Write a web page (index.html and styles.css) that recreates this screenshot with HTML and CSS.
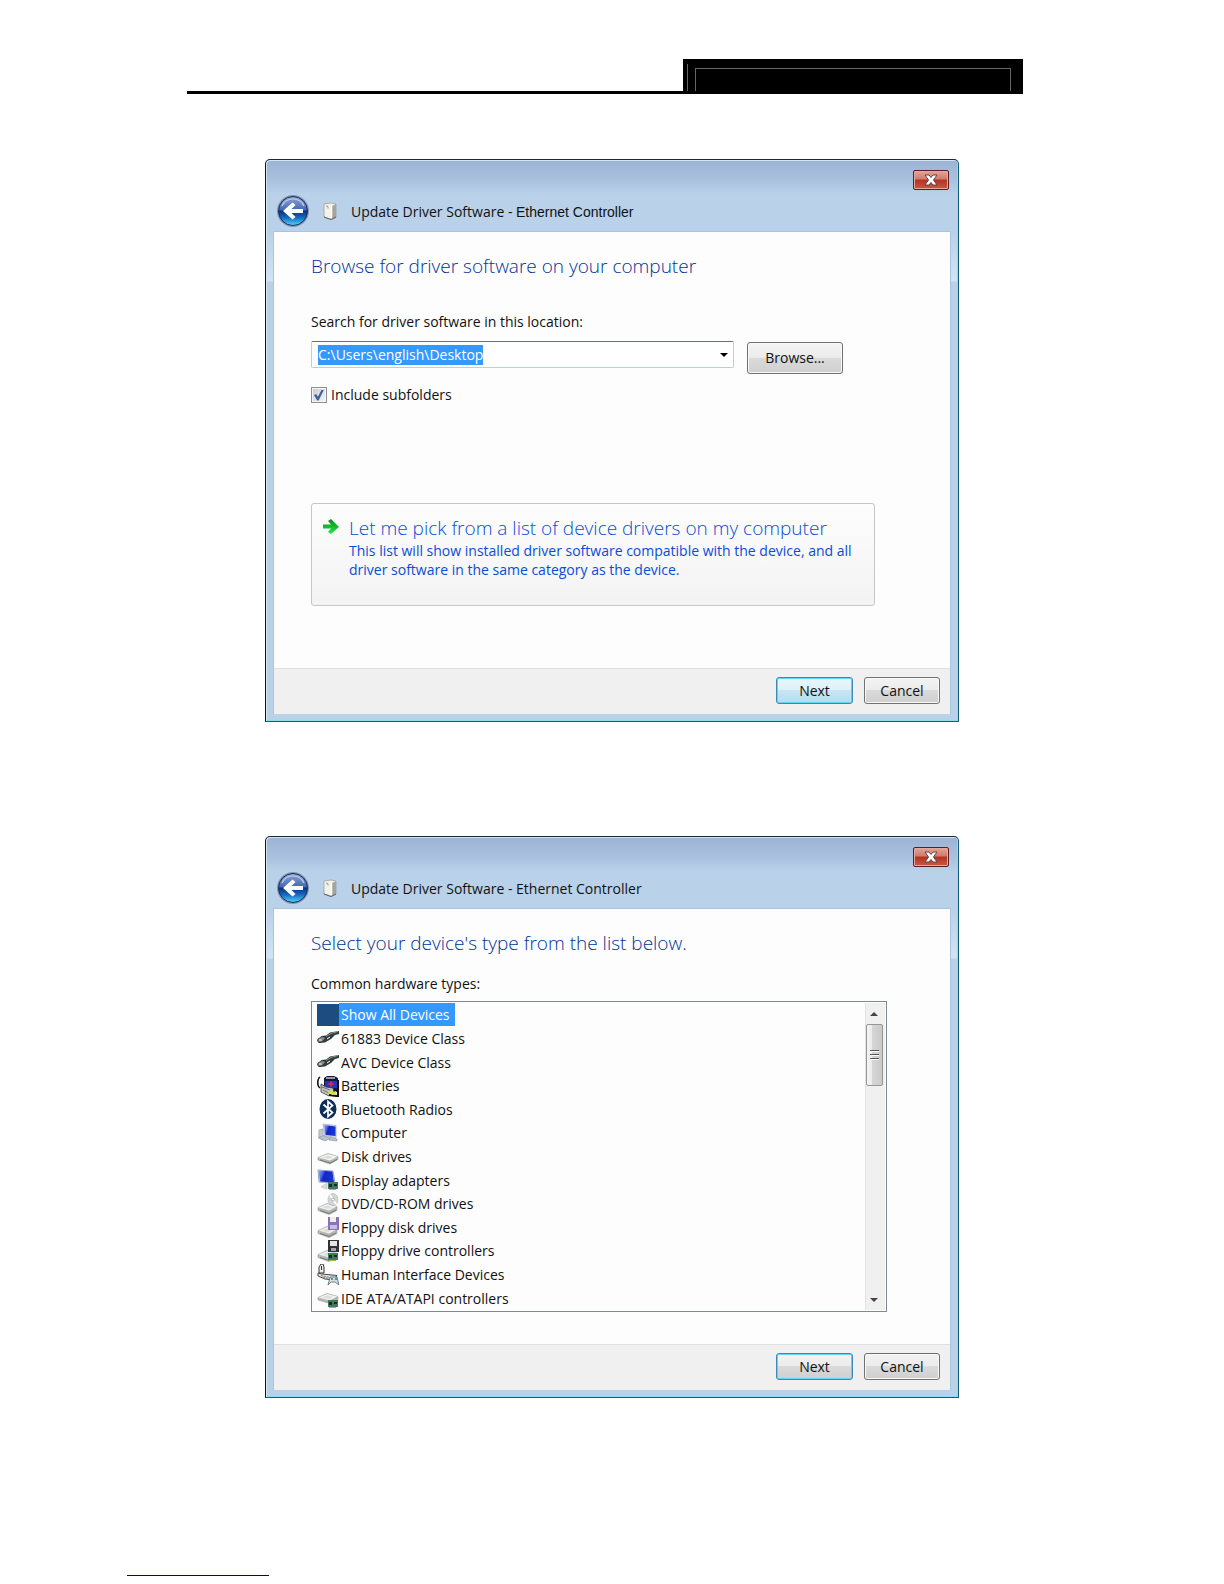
FILE: index.html
```html
<!DOCTYPE html>
<html lang="en">
<head>
<meta charset="utf-8">
<title>Update Driver Software</title>
<link rel="stylesheet" href="styles.css">
</head>
<body>
<svg class="defs" aria-hidden="true">
  <defs>
    <linearGradient id="ball" x1="0" y1="0" x2="0" y2="1">
      <stop offset="0" stop-color="#8fa5d2"/><stop offset=".46" stop-color="#4668b4"/>
      <stop offset=".5" stop-color="#0b2f83"/><stop offset=".72" stop-color="#1268bd"/><stop offset="1" stop-color="#4fd6fa"/>
    </linearGradient>
    <linearGradient id="screen" x1="0" y1="0" x2="1" y2=".3">
      <stop offset="0" stop-color="#8fa6f4"/><stop offset=".3" stop-color="#4a66e4"/><stop offset=".45" stop-color="#1226c4"/><stop offset="1" stop-color="#1a34d4"/>
    </linearGradient>
    <linearGradient id="go" x1="0" y1="0" x2="0" y2="1">
      <stop offset="0" stop-color="#0a8a1c"/><stop offset=".5" stop-color="#17b92c"/><stop offset="1" stop-color="#1df04a"/>
    </linearGradient>
    <symbol id="back" viewBox="0 0 34 34">
      <circle cx="17" cy="17" r="16" fill="#8296b4"/>
      <circle cx="17" cy="17" r="14.5" fill="url(#ball)" stroke="#1c2f5c"/>
      <path d="M6 12a12 12 0 0 1 22 0" fill="none" stroke="#b9c8e6" stroke-width="1.2"/>
      <path d="M7 17l9.500-8.500 3 2.500-4 4H27v4H15.500l4 4-3 2.500z" fill="#fff"/>
    </symbol>
    <symbol id="tower" viewBox="0 0 14 18">
      <path d="M1 2l7-1 5 1v13l-5 2.500L1 15z" fill="#f2f2ec" stroke="#9fa19a" stroke-width=".8"/>
      <path d="M9 4l4-2v13l-4 2z" fill="#a5a59b"/>
      <path d="M1 15l7 2.500 5-2.500" fill="none" stroke="#5e5e58"/>
      <path d="M3 4l2 .5v2" fill="none" stroke="#999"/><path d="M8.500 4v12" stroke="#fff" stroke-width="1.500"/>
    </symbol>
    <symbol id="close" viewBox="0 0 14 12">
      <path d="M1 1h4l2 2.500L9 1h4L9.500 6l3.500 5H9L7 8.500 5 11H1l3.500-5z" fill="#fff" stroke="#59464a"/>
    </symbol>
    <symbol id="plug" viewBox="0 0 22 22">
      <path d="M0 13l5-4 4-.5 4-3 9-1.500v3l-4 1-4 4-6 3.500-6 .5z" fill="#333b3b"/>
      <path d="M9 9.500l5-3 7-2" fill="none" stroke="#8d9393"/>
      <path d="M1 12l4-2.500 4 1-4 4.500H1z" fill="#8a8d8d" stroke="#222" stroke-width=".7"/>
      <path d="M2 13h2.500M10 12l3-2" stroke="#fff"/>
    </symbol>
    <symbol id="battery" viewBox="0 0 22 22">
      <path d="M7 3l3-2h7l4 2v14H7z" fill="#11183c"/>
      <path d="M9 2h9v2H9z" fill="#9599ab"/><path d="M8 6h12v7H8z" fill="#2634bd"/>
      <path d="M14 6.500v5M11.500 9h5" stroke="#e02442" stroke-width="2"/>
      <path d="M3 2C0 4 0 11 3 13" fill="none" stroke="#111" stroke-width="1.500"/>
      <path d="M4 9l5 3 7 1 1 4-5 4-8-4z" fill="#c4c7c3" stroke="#333" stroke-width=".8"/>
      <path d="M5 12l8 3M6 15l6 3" stroke="#6b6e6b"/>
      <path d="M12 20l7 1h2V5" fill="none" stroke="#111" stroke-width="2"/>
      <path d="M12 16l3-1 1 2 3-1 1 4-3-1-1 1-5-2z" fill="#d8e43c"/>
    </symbol>
    <symbol id="bluetooth" viewBox="0 0 22 22">
      <ellipse cx="11" cy="11" rx="8.500" ry="10" fill="#0b2d57"/>
      <path d="M6.500 6.500l9 8-4.500 4V3.500l4.500 4-9 8" fill="none" stroke="#fff" stroke-width="1.700"/>
    </symbol>
    <symbol id="computer" viewBox="0 0 22 22">
      <path d="M2 8l4-1v11l-4-2z" fill="#c5c8cc" stroke="#a7acb3"/>
      <path d="M6 2l13 1.500v12L8 14z" fill="#e1e5ee" stroke="#9aa5bb" stroke-width=".7"/>
      <path d="M7 3l11.500 1.500V14l-10-1z" fill="url(#screen)"/>
      <path d="M1 15.500l6-2 6 3-5 2.500zM13 15l7 2v2l-8-1z" fill="#b9c1cc" stroke="#8b94a0" stroke-width=".6"/>
    </symbol>
    <symbol id="disk" viewBox="0 0 22 22">
      <path d="M1 12.500l10-4 10 3v3l-8 4.500-12-4z" fill="#b4b6b4" stroke="#999c99" stroke-width=".6"/>
      <path d="M1.500 12.500L11 9l9.500 2.500-7.500 4z" fill="#f3f4f2"/>
      <path d="M5 12.500l6-2 5 1.500-4 2z" fill="#dcdedb"/>
      <path d="M3 15l10 3 7-3.500" fill="none" stroke="#777b77"/>
    </symbol>
    <symbol id="board" viewBox="0 0 22 22">
      <path d="M11 13h10v7H11z" fill="#3d7a5f"/><path d="M12 15h3v3h-3zM17 15h3v2h-3z" fill="#162c23"/><path d="M12 20.500h7" stroke="#b9ae45"/>
    </symbol>
    <symbol id="display" viewBox="0 0 22 22">
      <path d="M1 1l15 1 2 12-16-1z" fill="#dce3f1" stroke="#93a4cb"/>
      <path d="M1.500 1.500l14 1 1.500 11-14-1z" fill="url(#screen)"/>
      <path d="M4 18l6-4v6z" fill="#d9dbde" stroke="#bbb" stroke-width=".6"/><use href="#board"/>
    </symbol>
    <symbol id="tray" viewBox="0 0 22 22">
      <path d="M1 14.500l9-4 10 3v4l-8 4-11-4z" fill="#b4b6b4" stroke="#999c99" stroke-width=".6"/>
      <path d="M1.500 14.500L10 11l9.500 2.500-7.500 4z" fill="#f0f1ef"/>
      <path d="M5 14.500l5-2 5 1.500-4 2z" fill="#dcdedb"/><path d="M3 17.500l9 3 7-3.500" fill="none" stroke="#777b77"/>
    </symbol>
    <symbol id="dvd" viewBox="0 0 22 22">
      <use href="#tray"/><ellipse cx="16" cy="6.500" rx="5" ry="6" fill="#d3d7d6" stroke="#b0b5b3" stroke-width=".6"/>
      <path d="M13 2l6 9" stroke="#fff" stroke-width="2"/><circle cx="16" cy="6.500" r="1.500" fill="#fff" stroke="#999" stroke-width=".7"/>
    </symbol>
    <symbol id="floppy" viewBox="0 0 22 22">
      <use href="#tray"/><path d="M11 1h11v13H11z" fill="#8a72b6"/><path d="M13 1h6v5h-6z" fill="#eee"/><path d="M13 9h7v4h-7z" fill="#c9bce0"/>
    </symbol>
    <symbol id="floppyctl" viewBox="0 0 22 22">
      <use href="#tray"/><path d="M11 0h11v12H11z" fill="#2f3038"/><path d="M13 1h7v5h-7z" fill="#e5e5e5"/><path d="M14 8h5v3h-5z" fill="#a5a5a5"/><use href="#board"/>
    </symbol>
    <symbol id="hid" viewBox="0 0 22 22">
      <path d="M2 9V3l2-3h2l1 3v6z" fill="#eee" stroke="#333"/><path d="M4.500 2v4" stroke="#333"/>
      <path d="M1 9l4 1 15 1.500-3 4.500-9-1-7-3z" fill="#e1e2df" stroke="#484b48"/>
      <path d="M4 11.500l9 2M6 13l6 1.500" stroke="#888" stroke-dasharray="2 1"/>
      <path d="M11 21l2-8h7l2 8-4-3h-4z" fill="#d4dfe2" stroke="#53666e" stroke-width=".8"/><path d="M14 15h2M19 14v2" stroke="#227db8" stroke-width="1.500"/>
    </symbol>
    <symbol id="ide" viewBox="0 0 22 22">
      <path d="M1 10.500l9-4 11 3v3l-8 4-12-3.500z" fill="#b4b6b4" stroke="#999c99" stroke-width=".6"/>
      <path d="M1.500 10.500L10 7l10.500 2.500-8 4z" fill="#f0f1ef"/><path d="M5 10.500l5-2 6 1.500-4 2z" fill="#dcdedb"/><use href="#board"/>
    </symbol>
    <symbol id="arrow" viewBox="0 0 16 16">
      <path d="M0 5.500h8L5 2l3-2 8 8-8 7-3-2 3-3.500H0z" fill="url(#go)"/>
    </symbol>
  </defs>
</svg>

<div class="page">
  <header class="masthead"><div class="tab"><div class="tab-inner"></div></div></header>

  <main class="dialogs">
    <section class="dialog" aria-labelledby="t1">
      <div class="titlebar">
        <div class="caption"><button class="close" aria-label="Close"><svg><use href="#close"/></svg></button></div>
        <div class="nav">
          <button class="back" aria-label="Back"><svg><use href="#back"/></svg></button>
          <svg class="tower"><use href="#tower"/></svg>
          <span id="t1" class="title">Update Driver Software - <span class="device">Ethernet Controller</span></span>
        </div>
      </div>
      <div class="client">
        <div class="content">
          <h1>Browse for driver software on your computer</h1>
          <label class="field-label" for="path">Search for driver software in this location:</label>
          <div class="path-row">
            <div class="combo">
              <input id="path" class="path" type="text" value="C:\Users\english\Desktop">
              <button class="drop" aria-label="Show locations"><svg viewBox="0 0 8 4"><path d="M0 0h8L4 4z"/></svg></button>
            </div>
            <button class="btn browse">Browse...</button>
          </div>
          <label class="check"><input type="checkbox" checked>Include subfolders</label>
          <button class="command">
            <svg class="go"><use href="#arrow"/></svg>
            <span class="command-text">
              <span class="command-title">Let me pick from a list of device drivers on my computer</span>
              <span class="command-note">This list will show installed driver software compatible with the device, and all driver software in the same category as the device.</span>
            </span>
          </button>
        </div>
        <footer class="actions"><button class="btn next glow">Next</button><button class="btn">Cancel</button></footer>
      </div>
    </section>

    <section class="dialog" aria-labelledby="t2">
      <div class="titlebar">
        <div class="caption"><button class="close" aria-label="Close"><svg><use href="#close"/></svg></button></div>
        <div class="nav">
          <button class="back" aria-label="Back"><svg><use href="#back"/></svg></button>
          <svg class="tower"><use href="#tower"/></svg>
          <span id="t2" class="title">Update Driver Software - Ethernet Controller</span>
        </div>
      </div>
      <div class="client">
        <div class="content">
          <h1>Select your device's type from the list below.</h1>
          <p id="types" class="list-label">Common hardware types:</p>
          <div class="list">
            <ul class="items" role="listbox" aria-labelledby="types">
              <li role="option" aria-selected="true"><span class="blank"></span><span class="name">Show All Devices</span></li>
              <li role="option"><svg><use href="#plug"/></svg><span class="name">61883 Device Class</span></li>
              <li role="option"><svg><use href="#plug"/></svg><span class="name">AVC Device Class</span></li>
              <li role="option"><svg><use href="#battery"/></svg><span class="name">Batteries</span></li>
              <li role="option"><svg><use href="#bluetooth"/></svg><span class="name">Bluetooth Radios</span></li>
              <li role="option"><svg><use href="#computer"/></svg><span class="name">Computer</span></li>
              <li role="option"><svg><use href="#disk"/></svg><span class="name">Disk drives</span></li>
              <li role="option"><svg><use href="#display"/></svg><span class="name">Display adapters</span></li>
              <li role="option"><svg><use href="#dvd"/></svg><span class="name">DVD/CD-ROM drives</span></li>
              <li role="option"><svg><use href="#floppy"/></svg><span class="name">Floppy disk drives</span></li>
              <li role="option"><svg><use href="#floppyctl"/></svg><span class="name">Floppy drive controllers</span></li>
              <li role="option"><svg><use href="#hid"/></svg><span class="name">Human Interface Devices</span></li>
              <li role="option"><svg><use href="#ide"/></svg><span class="name">IDE ATA/ATAPI controllers</span></li>
            </ul>
            <div class="scroll">
              <button class="step" aria-label="Scroll up"><svg viewBox="0 0 8 4"><path d="M0 4h8L4 0z"/></svg></button>
              <div class="thumb"><i></i><i></i><i></i></div>
              <button class="step" aria-label="Scroll down"><svg viewBox="0 0 8 4"><path d="M0 0h8L4 4z"/></svg></button>
            </div>
          </div>
        </div>
        <footer class="actions"><button class="btn next">Next</button><button class="btn">Cancel</button></footer>
      </div>
    </section>
  </main>

  <a class="footlink" href="#" aria-label="Source"></a>
</div>
</body>
</html>
```

FILE: styles.css
```css
* { box-sizing: border-box; }

body {
  margin: 0;
  background: #fff;
  color: #111;
  font-family: "Open Sans", "Noto Sans", sans-serif;
  font-size: 14px;
  line-height: 20px;
}

button, input {
  font: inherit;
  color: inherit;
  padding: 0;
  margin: 0;
  border: 0;
  background: none;
}

svg { display: block; }
.defs { position: absolute; width: 0; height: 0; }

.page { padding: 59px 201px 8px 187px; }

/* Black header band */
.masthead {
  display: flex;
  justify-content: flex-end;
  height: 35px;
  border-bottom: 3px solid #000;
}
.tab {
  display: flex;
  width: 340px;
  padding: 5px 12px 0 4px;
  background: #000;
}
.tab-inner {
  flex: 1;
  margin: 4px 0 0 7px;
  border: 1px solid #666;
  border-bottom: 0;
}
.tab::before { content: ""; width: 1px; background: #666; }

.dialogs {
  display: flex;
  flex-direction: column;
  gap: 114px;
  padding: 65px 64px 0 78px;
}

/* Glass window frame */
.dialog {
  padding: 0 7px 7px;
  border: 1px solid #10607c;
  border-top-color: #1c2733;
  border-left-color: #0b1520;
  border-radius: 5px 5px 0 0;
  background: linear-gradient(#9cb4d4 0, #a9c1dd 20px, #b9d1e9 34px, #b9d1e9 72px, #d3e3f4 121px, #b9d1e9 122px);
  box-shadow: inset 1px 1px #d5e4f2, inset -1px -1px #8cdcf0;
}
.titlebar { height: 71px; }
.caption {
  display: flex;
  justify-content: flex-end;
  padding: 10px 2px 0 0;
}
.close {
  display: grid;
  place-items: center;
  width: 36px;
  height: 20px;
  border: 1px solid #5a1d22;
  border-radius: 2px;
  background: linear-gradient(#e3a597, #d07b6c 45%, #b5321f 50%, #c65a45);
  box-shadow: inset 0 0 0 1px #e5aa9d;
}
.close svg { width: 14px; height: 12px; }
.nav {
  display: flex;
  align-items: center;
  height: 32px;
  margin-top: 5px;
  padding-left: 3px;
}
.back svg { width: 34px; height: 34px; }
.tower { width: 14px; height: 18px; margin: 0 14px 0 13px; }
.title { padding-top: 2px; white-space: pre; }
.device { font-family: "Liberation Sans", sans-serif; }

.client {
  border: 1px solid #a9c4dd;
  border-bottom: 0;
  background: #fdfdfd;
}
.content { padding: 22px 62px 0 37px; }
h1 {
  margin: 0;
  color: #003399;
  font-size: 19px;
  font-weight: 300;
  line-height: 24px;
}

.field-label { display: block; margin-top: 34px; }
.path-row {
  display: flex;
  align-items: flex-start;
  gap: 13px;
  margin: 9px 45px 0 0;
}
.combo {
  flex: 1;
  display: flex;
  justify-content: space-between;
  align-items: center;
  height: 27px;
  padding: 0 5px 0 6px;
  border: 1px solid #b5cfe7;
  border-top-color: #3d7bad;
  border-radius: 2px;
  background: #fff;
}
.path {
  width: 165px;
  height: 20px;
  background: #39f;
  color: #fff;
}
.drop svg { width: 8px; height: 4px; }

.btn {
  width: 76px;
  height: 27px;
  border: 1px solid #707070;
  border-radius: 3px;
  background: linear-gradient(#f3f3f3, #ebebeb 50%, #dadada 50%, #cfcfcf);
  box-shadow: inset 0 0 0 1px #fafafa;
}
.browse { width: 96px; height: 32px; margin-top: 1px; }
.next {
  width: 77px;
  border-color: #3c8ab8;
  box-shadow: inset 0 0 0 1px #5fd3f5;
}
.glow { background: linear-gradient(#eaf6fb, #dcf1fa 50%, #c8e6f5 50%, #b5dcf0); }

.check { display: flex; align-items: center; gap: 4px; margin-top: 11px; }
.check input {
  appearance: none;
  display: grid;
  place-items: center;
  width: 16px;
  height: 16px;
  border: 1px solid #8e8f8f;
  background: linear-gradient(135deg, #c8ccd2, #f6f6f6);
  box-shadow: inset 0 0 0 1px #f4f4f4;
}
.check input::after {
  content: "";
  width: 10px;
  height: 11px;
  background: #41609a;
  clip-path: polygon(0 50%, 22% 42%, 38% 66%, 78% 0, 100% 0, 46% 100%, 32% 100%);
}

.command {
  display: flex;
  align-items: flex-start;
  width: 100%;
  max-width: 564px;
  height: 103px;
  margin: 98px 0 62px;
  padding: 11px 16px 0 11px;
  border: 1px solid #c6c6c6;
  border-radius: 3px;
  background: linear-gradient(#fdfdfd, #f3f3f3);
  color: #0b4bd8;
  text-align: left;
}
.go { width: 16px; height: 16px; margin: 4px 10px 0 0; flex: none; }
.command-text { display: grid; flex: 1; }
.command-title { font-size: 19px; font-weight: 300; line-height: 26px; }
.command-note { line-height: 19px; }

.actions {
  display: flex;
  justify-content: flex-end;
  gap: 11px;
  height: 46px;
  padding: 8px 10px 0 0;
  border-top: 1px solid #dfdfdf;
  background: #f0f0f0;
}

/* Hardware type list */
.list-label { margin: 19px 0 7px; }
.list {
  display: flex;
  max-width: 576px;
  height: 311px;
  margin: 0 -12px 32px 0;
  padding: 1px;
  border: 1px solid #828790;
  background: #fdfdfd;
}
.items {
  flex: 1;
  display: grid;
  grid-template-rows: repeat(13, 1fr);
  margin: 0;
  padding: 0 0 0 4px;
  list-style: none;
}
.items li { display: flex; align-items: center; }
.items svg, .blank { width: 22px; height: 22px; }
.blank { background: #1c4c80; }
.name { padding: 2px 5px 1px 2px; }
[aria-selected] .name { background: #39f; color: #fff; }
.scroll {
  display: flex;
  flex-direction: column;
  width: 20px;
  border-left: 1px solid #e3e3e3;
  background: #f0f0f0;
}
.step { display: grid; place-items: center; width: 16px; height: 21px; }
.step:last-child { margin-top: auto; }
.step svg { width: 8px; height: 4px; fill: #444; }
.thumb {
  display: grid;
  place-content: center;
  gap: 2px;
  width: 17px;
  height: 62px;
  border: 1px solid #979797;
  border-radius: 2px;
  background: linear-gradient(90deg, #f4f4f4, #ececec 30%, #d6d6d6 35%, #cacaca);
}
.thumb i { width: 9px; height: 2px; background: linear-gradient(#555 50%, #fff 50%); }

.footlink {
  display: block;
  width: 142px;
  height: 178px;
  margin-left: -60px;
  border-bottom: 1px solid #00008b;
}
```
